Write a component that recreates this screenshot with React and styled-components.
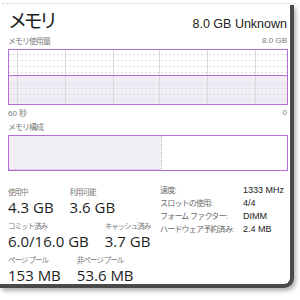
import { Fragment } from "react"
import styled, { createGlobalStyle } from "styled-components"

const GlobalStyle = createGlobalStyle`
  html, body { margin: 0; padding: 0; background: #fff; }
  body { font-family: "Liberation Sans", "Noto Sans CJK JP", sans-serif; }
`

const Page = styled.div`
  width: 300px;
  height: 300px;
  overflow: hidden;
  background: #fff;
  padding-top: 3px;
  box-sizing: border-box;
`

const DotLine = styled.div`
  border-top: 1px dotted #cfcfcf;
  margin: 0 4px 0 2px;
`

const Panel = styled.div`
  box-sizing: border-box;
  width: 294px;
  height: 283px;
  margin-top: 1px;
  background: #fff;
  border-right: 4px solid #4a4a4a;
  border-bottom: 4px solid #4a4a4a;
  border-bottom-right-radius: 10px;
  box-shadow: 2px 3px 4px rgba(0, 0, 0, 0.3);
  padding: 2px 2px 0 8px;
  display: flex;
  flex-direction: column;
`

const Header = styled.div`
  display: flex;
  justify-content: space-between;
  align-items: baseline;
  height: 27px;
`

const Title = styled.div`
  font-family: "Noto Sans CJK JP", sans-serif;
  font-size: 19px;
  letter-spacing: -3.5px;
  color: #1e1e1e;
  line-height: 26px;
`

const Summary = styled.div`
  font-family: "Liberation Sans", sans-serif;
  font-size: 12.5px;
  color: #222;
  margin-right: 1px;
`

const SmallRow = styled.div`
  display: flex;
  justify-content: space-between;
  align-items: center;
  height: 14px;
  margin-top: ${p => p.top || 0}px;
  margin-right: 1px;
`

const Small = styled.span`
  font-size: 8px;
  color: #7a7a7a;
  letter-spacing: ${p => (p.jp ? "-1px" : "0")};
`

const Graph = styled.div`
  box-sizing: border-box;
  height: ${p => p.h}px;
  width: 280px;
  border: 1px solid #b46fd6;
  background: #fff;
  margin-top: ${p => p.top || 0}px;
  svg { display: block; }
`

const StatsWrap = styled.div`
  display: flex;
  margin-top: 16px;
`

const LeftStats = styled.div`
  width: 152px;
  display: flex;
  flex-direction: column;
  gap: 5px;
`

const StatRow = styled.div`
  display: flex;
  gap: 16px;
`

const Stat = styled.div`
  display: flex;
  flex-direction: column;
`

const StatLabel = styled.span`
  font-size: 7.5px;
  color: #7a7a7a;
  letter-spacing: -1px;
  line-height: 11px;
  white-space: nowrap;
`

const StatValue = styled.span`
  font-family: "Open Sans", "Liberation Sans", sans-serif;
  font-size: 15px;
  color: #1e1e1e;
  line-height: 18px;
  white-space: nowrap;
`

const Specs = styled.div`
  display: grid;
  grid-template-columns: 83px auto;
  row-gap: 2px;
  align-content: start;
  margin-top: -2px;
`

const SpecLabel = styled.span`
  font-size: 8px;
  color: #6a6a6a;
  line-height: 11px;
  letter-spacing: -0.8px;
  white-space: nowrap;
`

const SpecValue = styled.span`
  font-size: 9px;
  color: #222;
  line-height: 11px;
  white-space: nowrap;
`

const UsageChart = () => {
  const w = 278
  const h = 54
  const verticals = [8, 56, 104, 150, 198, 246]
  const horizontals = [4, 10, 16, 22, 33, 38, 44, 50]
  const used = 25
  return (
    <svg width={w} height={h}>
      <rect x="0" y={used} width={w} height={h - used} fill="#f1edf6" />
      {verticals.map(x => (
        <line key={x} x1={x + 0.5} y1="0" x2={x + 0.5} y2={h} stroke="#d9d6dc" strokeWidth="1" />
      ))}
      {horizontals.map(y => (
        <line key={y} x1="0" y1={y + 0.5} x2={w} y2={y + 0.5} stroke="#dcdcdc" strokeWidth="1" strokeDasharray="2 2" />
      ))}
      <line x1="0" y1={used + 0.5} x2={w} y2={used + 0.5} stroke="#b46fd6" strokeWidth="1" />
    </svg>
  )
}

const CompositionChart = () => (
  <svg width={278} height={34}>
    <rect x="0" y="0" width="152" height="34" fill="#f1eff3" />
    <line x1="152.5" y1="0" x2="152.5" y2="34" stroke="#b8b0a8" strokeWidth="1" strokeDasharray="1 1" />
    <line x1="0" y1="33.5" x2="152" y2="33.5" stroke="#c9a8dc" strokeWidth="1" strokeDasharray="1 1" />
  </svg>
)

const specs = [
  ["速度:", "1333 MHz"],
  ["スロットの使用:", "4/4"],
  ["フォーム ファクター:", "DIMM"],
  ["ハードウェア予約済み:", "2.4 MB"],
]

const statRows = [
  [["使用中", "4.3 GB"], ["利用可能", "3.6 GB"]],
  [["コミット済み", "6.0/16.0 GB"], ["キャッシュ済み", "3.7 GB"]],
  [["ページ プール", "153 MB"], ["非ページ プール", "53.6 MB"]],
]

export default function App() {
  return (
    <Page>
      <GlobalStyle />
      <DotLine />
      <Panel>
        <Header>
          <Title>メモリ</Title>
          <Summary>8.0 GB Unknown</Summary>
        </Header>
        <SmallRow top={1}>
          <Small jp>メモリ使用量</Small>
          <Small>8.0 GB</Small>
        </SmallRow>
        <Graph h={56} top={2}>
          <UsageChart />
        </Graph>
        <SmallRow top={1}>
          <Small>60 秒</Small>
          <Small>0</Small>
        </SmallRow>
        <SmallRow top={1}>
          <Small jp>メモリ構成</Small>
        </SmallRow>
        <Graph h={36} top={2}>
          <CompositionChart />
        </Graph>
        <StatsWrap>
          <LeftStats>
            {statRows.map((row, i) => (
              <StatRow key={i}>
                {row.map(([label, value]) => (
                  <Stat key={label}>
                    <StatLabel>{label}</StatLabel>
                    <StatValue>{value}</StatValue>
                  </Stat>
                ))}
              </StatRow>
            ))}
          </LeftStats>
          <Specs>
            {specs.map(([label, value]) => (
              <Fragment key={label}>
                <SpecLabel>{label}</SpecLabel>
                <SpecValue>{value}</SpecValue>
              </Fragment>
            ))}
          </Specs>
        </StatsWrap>
      </Panel>
    </Page>
  )
}
